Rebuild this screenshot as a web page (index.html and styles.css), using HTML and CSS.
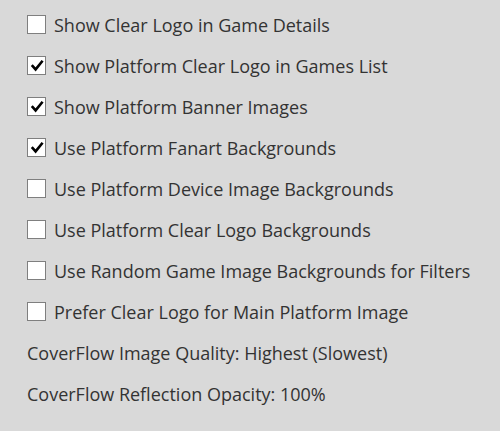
FILE: index.html
```html
<!DOCTYPE html>
<html>
<head>
<meta charset="utf-8">
<link rel="stylesheet" href="styles.css">
</head>
<body>
<div class="list">
  <div class="row"><span class="box"></span><span class="label">Show Clear Logo in Game Details</span></div>
  <div class="row"><span class="box"><svg viewBox="0 0 17 17"><path d="M3.8 8.2 L7.6 12.4 L14.6 3.8" fill="none" stroke="#000" stroke-width="2.6"/></svg></span><span class="label">Show Platform Clear Logo in Games List</span></div>
  <div class="row"><span class="box"><svg viewBox="0 0 17 17"><path d="M3.8 8.2 L7.6 12.4 L14.6 3.8" fill="none" stroke="#000" stroke-width="2.6"/></svg></span><span class="label">Show Platform Banner Images</span></div>
  <div class="row"><span class="box"><svg viewBox="0 0 17 17"><path d="M3.8 8.2 L7.6 12.4 L14.6 3.8" fill="none" stroke="#000" stroke-width="2.6"/></svg></span><span class="label">Use Platform Fanart Backgrounds</span></div>
  <div class="row"><span class="box"></span><span class="label">Use Platform Device Image Backgrounds</span></div>
  <div class="row"><span class="box"></span><span class="label">Use Platform Clear Logo Backgrounds</span></div>
  <div class="row"><span class="box"></span><span class="label">Use Random Game Image Backgrounds for Filters</span></div>
  <div class="row"><span class="box"></span><span class="label">Prefer Clear Logo for Main Platform Image</span></div>
  <div class="row"><span class="label">CoverFlow Image Quality: Highest (Slowest)</span></div>
  <div class="row"><span class="label">CoverFlow Reflection Opacity: 100%</span></div>
</div>
</body>
</html>
```
FILE: styles.css
```css
html, body {
  margin: 0;
  padding: 0;
  background: #d9d9d9;
}
body {
  width: 500px;
  height: 431px;
  overflow: hidden;
  font-family: "Open Sans", "Noto Sans", sans-serif;
  font-size: 18px;
  color: #333333;
}
.list {
  display: flex;
  flex-direction: column;
  padding: 4px 0 0 27px;
}
.row {
  height: 41px;
  display: flex;
  align-items: center;
}
.box {
  width: 19px;
  height: 19px;
  box-sizing: border-box;
  border: 1px solid #7f7f7f;
  background: #ffffff;
  margin-right: 8px;
  display: flex;
  flex: none;
}
.box svg {
  display: block;
  width: 17px;
  height: 17px;
}
.label {
  white-space: nowrap;
}
```
